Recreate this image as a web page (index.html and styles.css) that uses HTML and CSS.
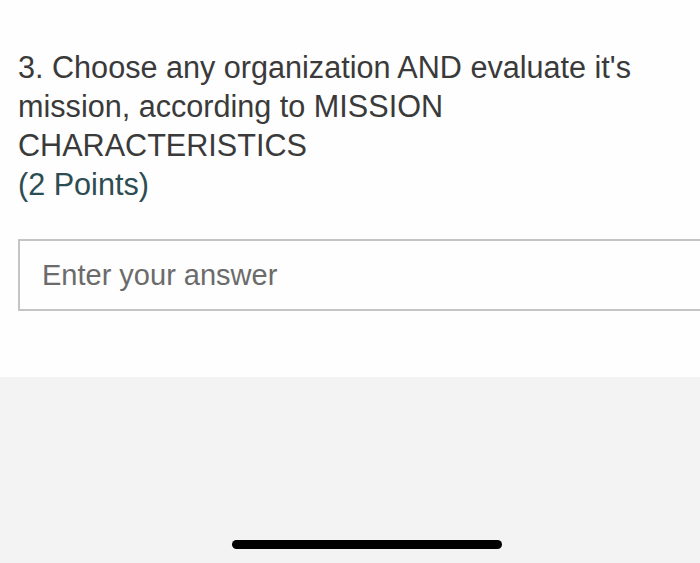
FILE: index.html
```html
<!DOCTYPE html>
<html lang="en">
<head>
<meta charset="utf-8">
<title>Question</title>
<link rel="stylesheet" href="styles.css">
</head>
<body>
<main class="page">
  <section class="question">
    <p class="title">3. Choose any organization AND evaluate it's mission, according to MISSION CHARACTERISTICS</p>
    <p class="points">(2 Points)</p>
    <div class="answer">Enter your answer</div>
  </section>
  <footer class="bottom">
    <div class="home-indicator"></div>
  </footer>
</main>
</body>
</html>
```
FILE: styles.css
```css
html, body {
  margin: 0;
  padding: 0;
  width: 700px;
  height: 563px;
  overflow: hidden;
  background: #f3f3f3;
}
.page {
  display: flex;
  flex-direction: column;
  height: 563px;
  font-family: "Liberation Sans", Arial, sans-serif;
}
.question {
  background: #fefefe;
  height: 377px;
  box-sizing: border-box;
  padding: 48px 0 0 18px;
}
.title {
  margin: 0;
  width: 670px;
  font-size: 30.6px;
  line-height: 39px;
  color: #3a3a3a;
}
.points {
  margin: 0;
  font-size: 30.6px;
  line-height: 39px;
  color: #2c4d52;
}
.answer {
  margin-top: 35px;
  height: 72px;
  border: 2px solid #c4c4c4;
  border-right: none;
  box-sizing: border-box;
  padding-left: 22px;
  display: flex;
  align-items: center;
  font-size: 29px;
  color: #6b6b6b;
}
.bottom {
  flex: 1;
  display: flex;
  align-items: flex-end;
  padding: 0 0 14px 232px;
}
.home-indicator {
  width: 270px;
  height: 9px;
  border-radius: 5px;
  background: #000;
}
```
